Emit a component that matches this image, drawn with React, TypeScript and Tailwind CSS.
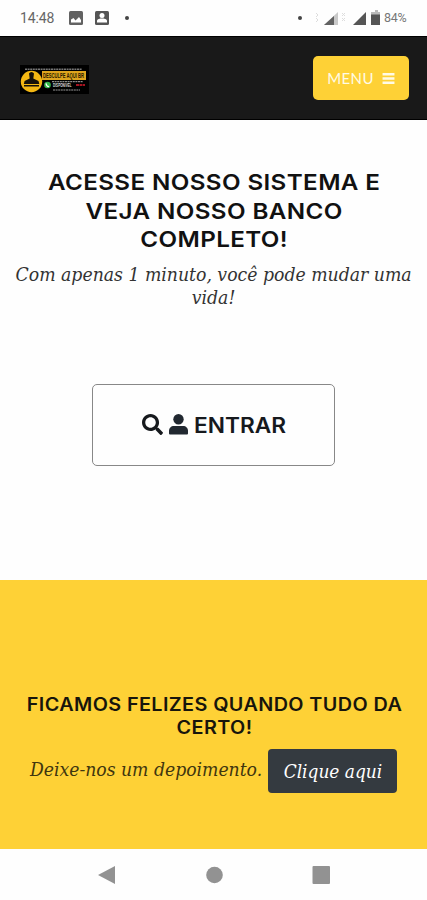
import React from 'react';
import { FaSearch } from 'react-icons/fa';

const StatusBar: React.FC = () => (
  <div className="flex h-9 items-center justify-between bg-[#fefefe] pl-5 pr-[18px] font-['Roboto',sans-serif] text-[#666]">
    <div className="flex items-center">
      <span className="w-[36px] text-[14px] tracking-[-0.1px]">14:48</span>
      <svg className="ml-[13px]" width="14" height="14" viewBox="0 0 14 14">
        <rect width="14" height="14" rx="1.5" fill="#626262" />
        <path d="M2 11.5V8.5L4.500 7l2 2.500L10 6l2 3v2.500z" fill="#fff" />
      </svg>
      <svg className="ml-[12px]" width="14" height="14" viewBox="0 0 14 14">
        <rect width="14" height="14" rx="1.5" fill="#555" />
        <circle cx="7" cy="4.5" r="2.5" fill="#fff" />
        <path d="M2 11.5V10c0-2 3-2.5 5-2.5s5 .5 5 2.5v1.5z" fill="#fff" />
      </svg>
      <span className="ml-4 size-1 rounded-full bg-[#444]" />
    </div>
    <div className="flex items-center">
      <span className="size-1 rounded-full bg-[#444]" />
      <svg className="ml-[12px]" width="68" height="16" viewBox="2 0 68 16">
        <path d="M4 3l2 2-2 2M4 12l2-2-2-2" stroke="#ddd" fill="none" />
        <path d="M26 2v13H12z" fill="#c9c9c9" />
        <path d="M22 6v9H12z" fill="#626262" />
        <path d="M30 3l3 3m0-3-3 3M30 8l3 3m0-3-3 3" stroke="#ddd" fill="none" />
        <path d="M54 2v13H41z" fill="#555" />
        <path d="M61 2h2V0h3v2h2v4h-9V2z" fill="#bbb" />
        <path d="M59 4.500h9V15h-9z" fill="#555" />
      </svg>
      <span className="ml-[2px] w-[25px] text-[12.5px] tracking-[-0.3px] text-[#777]">84%</span>
    </div>
  </div>
);

const Logo: React.FC = () => (
  <svg width="69" height="29" viewBox="0 0 69 29">
    <rect width="69" height="29" fill="#000" />
    <path d="M5 4.2h57" stroke="#777" strokeWidth="1.4" strokeDasharray="2 .6" />
    <rect x="22" y="6" width="44" height="9" fill="#dfa51d" />
    <g fontFamily="Liberation Sans" fontWeight="bold">
      <text transform="translate(23 13.4) scale(.52 1)" fontSize="8" fill="#2a1b00">DESCULPE AQUI BR</text>
      <text transform="translate(33 22) scale(.62 1)" fontSize="5" fill="#ddd">DISPONIVEL</text>
    </g>
    <path d="M32 16.700h31" stroke="#aaa" strokeDasharray="2 .6" />
    <path d="M56 20h9" stroke="#a51420" strokeWidth="2" strokeDasharray="3 .5" />
    <path d="M33 25h27" stroke="#999" strokeDasharray="2 .6" />
    <circle cx="11.5" cy="16.5" r="10.7" fill="#f3b713" />
    <path d="M9 8.5a2.800 2.800 0 0 1 5 0l-.7 5 5.200 2.500.8 3H3.800l.8-3 5.100-2.500zM4 20h15v1.500H4z" fill="#15110a" />
    <circle cx="27.5" cy="20" r="3.3" fill="#32b84b" />
    <path d="M26 18.400c.2 2 1.400 3.100 3.100 3.300" stroke="#fff" strokeWidth="1.1" fill="none" />
  </svg>
);

const App: React.FC = () => {
  return (
    <div className="flex h-[900px] w-full flex-col overflow-hidden bg-[#fefefe] font-['Inter',sans-serif]">
      <StatusBar />
      <header className="flex h-[84px] items-center justify-between border-y border-black bg-[#191919] pl-5 pr-[18px]">
        <div className="pt-[2px]">
          <Logo />
        </div>
        <button className="flex h-11 w-24 items-center justify-center gap-[8px] rounded-[5px] bg-[#fed136] font-['Lato',sans-serif] text-[15px] tracking-[0.4px] text-[#fffbe6]">
          MENU
          <svg width="13" height="11" viewBox="0 0 13 12" fill="currentColor">
            <path d="M0 0h13v2.600H0zM0 4.700h13v2.600H0zM0 9.400h13V12H0z" />
          </svg>
        </button>
      </header>

      <section className="flex h-[460px] flex-col items-center pt-12 text-center">
        <h2 className="ml-[2px] scale-x-110 text-[22px] leading-[28.5px] font-semibold tracking-[0.35px] whitespace-nowrap text-[#111]">
          <span className="block">ACESSE NOSSO SISTEMA E</span>
          <span className="block">VEJA NOSSO BANCO</span>
          <span className="block">COMPLETO!</span>
        </h2>
        <p className="mt-[9px] scale-x-[1.067] font-['DejaVu_Serif',serif] text-[18px] leading-[23px] font-stretch-condensed whitespace-nowrap text-[#333] italic">
          <span className="block">Com apenas 1 minuto, você pode mudar uma</span>
          <span className="block">vida!</span>
        </p>
        <button className="mt-[75px] flex h-[82px] w-[243px] items-center justify-center rounded-[5px] border border-[#888] text-[21px] font-semibold text-[#16191d]">
          <FaSearch size={21} />
          <svg className="mr-[6px] ml-[6px]" width="19" height="21" viewBox="0 0 19 21" fill="#212830">
            <circle cx="9.5" cy="5.3" r="5.2" />
            <path d="M5 12h9c3 0 5 2 5 5v2.500a1 1 0 0 1-1 1H1a1 1 0 0 1-1-1V17c0-3 2-5 5-5z" />
          </svg>
          <span className="w-[92px] origin-left scale-x-108 pt-[2px] text-left">ENTRAR</span>
        </button>
      </section>

      <section className="h-[269px] bg-[#fed136] pt-[113px] text-center">
        <h3 className="ml-[2px] scale-x-110 text-[18px] leading-[23px] font-semibold tracking-[0.36px] whitespace-nowrap text-[#17150c]">
          <span className="block">FICAMOS FELIZES QUANDO TUDO DA</span>
          <span className="block">CERTO!</span>
        </h3>
        <div className="mt-[10px] flex items-center gap-[6px] pl-[30px] font-['DejaVu_Serif',serif] text-[18px] font-stretch-condensed whitespace-nowrap italic">
          <span className="w-[232px] origin-left scale-x-[1.064] pb-1 text-left text-[#40360f]">Deixe-nos um depoimento.</span>
          <button className="h-11 w-[129px] rounded-[4px] bg-[#343a40] text-white italic">
            <span className="inline-block scale-x-105">Clique aqui</span>
          </button>
        </div>
      </section>

      <nav className="flex h-[51px] items-center justify-center bg-[#fefefe]">
        <svg width="234" height="20" viewBox="0 0 234 20" fill="#929292">
          <path d="M18 1v18L1 10z" />
          <circle cx="117.5" cy="10" r="8.3" />
          <rect x="215.500" y="1" width="17.500" height="18" rx="1" />
        </svg>
      </nav>
    </div>
  );
};

export default App;
